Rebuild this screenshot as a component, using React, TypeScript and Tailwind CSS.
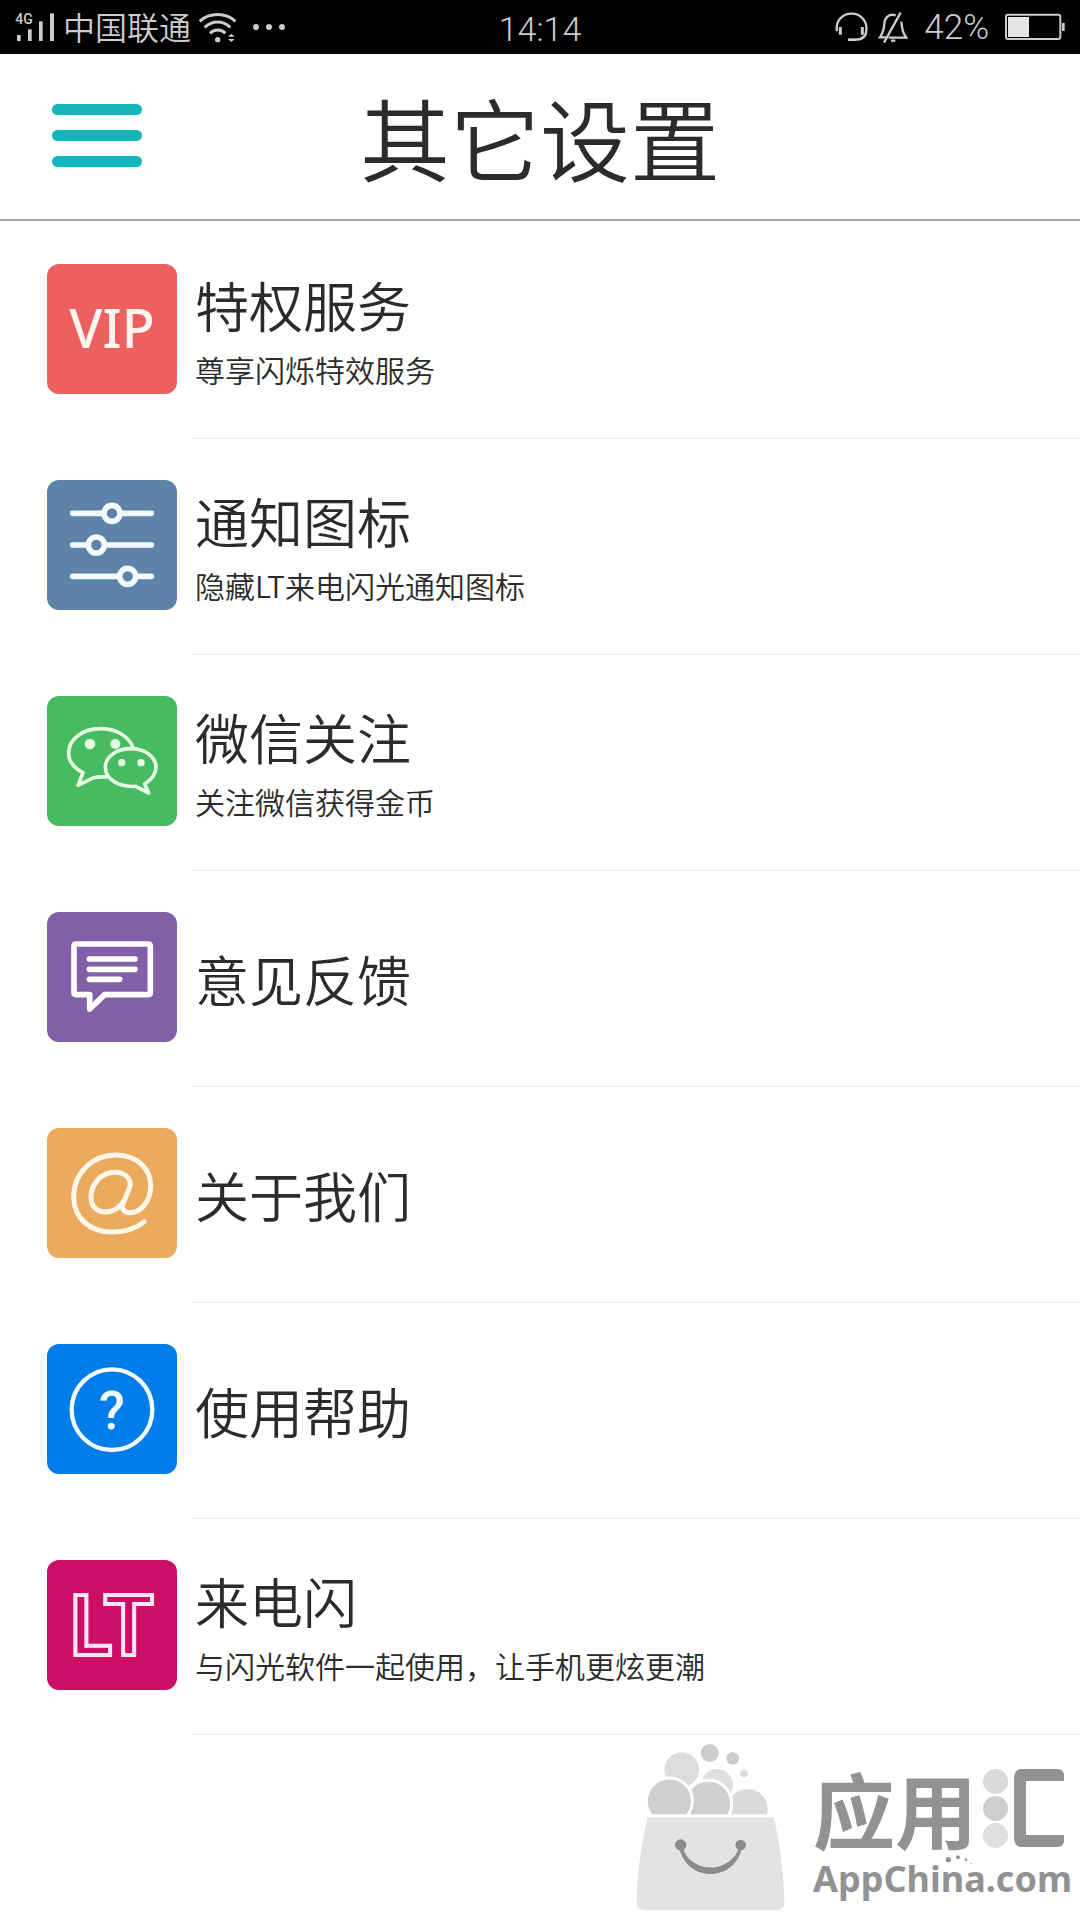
import type { ReactNode } from "react";

interface SettingItem {
  id: string;
  title: string;
  description?: string;
  tile: string;
  icon: ReactNode;
}

const SignalIcon = () => (
  <svg viewBox="45 36 120 90" className="h-[30px] w-10" fill="#cccccc" aria-hidden="true">
    <text x="46" y="72" fontSize="42" fontWeight="500" fontFamily="Roboto, sans-serif">
      4G
    </text>
    <rect x="51" y="105" width="11" height="18" />
    <rect x="84" y="88" width="11" height="35" />
    <rect x="117" y="64" width="11" height="59" />
    <rect x="150" y="40" width="12" height="83" />
  </svg>
);

const WifiIcon = () => (
  <svg viewBox="600 33 114 93" className="h-[31px] w-[38px]" fill="none" stroke="#cccccc" strokeWidth="9" aria-hidden="true">
    <path d="M602 61 C632 34 680 34 709 61" />
    <path d="M617 79 C640 58 672 58 694 79" />
    <path d="M633 97 C646 84 667 84 679 97" />
    <circle cx="656" cy="116" r="8" fill="#cccccc" stroke="none" />
    <path d="M687 107 L697 98 L707 107 Z M687 114 L697 123 L707 114 Z" fill="#cccccc" stroke="none" />
  </svg>
);

const HeadsetIcon = () => (
  <svg viewBox="165 36 99 90" className="h-[30px] w-[33px]" fill="none" stroke="#cccccc" strokeWidth="7" aria-hidden="true">
    <path d="M171 94 C165 62 188 41 215 41 C242 41 262 62 259 92 C258 112 245 119 226 119" />
    <path d="M204 119 H228" strokeWidth="8" />
    <path d="M181 81 V104 M247 81 V104" strokeWidth="9" />
  </svg>
);

const BellOffIcon = () => (
  <svg viewBox="294 33 90 96" className="h-8 w-[30px]" fill="none" stroke="#cccccc" strokeWidth="7" aria-hidden="true">
    <path d="M347 46 C328 40 314 52 313 71 C312 92 308 100 300 112 H318" />
    <path d="M364 65 C366 92 370 99 379 113 H326" />
    <path d="M362 38 L312 128" />
    <path d="M333 122 H346" />
  </svg>
);

const BatteryIcon = () => (
  <svg viewBox="672 39 180 84" className="h-7 w-[60px]" aria-hidden="true">
    <rect x="675" y="44" width="163" height="73" rx="6" fill="none" stroke="#cccccc" strokeWidth="6" />
    <rect x="681" y="51" width="63" height="60" fill="#e6e6e6" />
    <rect x="843" y="69" width="8" height="24" fill="#cccccc" />
  </svg>
);

const tileSvg = "size-full";

const SlidersIcon = () => (
  <svg viewBox="0 0 390 390" className={tileSvg} fill="#5d84a8" stroke="#f2faff" strokeWidth="17" strokeLinecap="round" aria-hidden="true">
    <path d="M77 100 H313 M77 195 H313 M77 289 H313" />
    <circle cx="195" cy="100" r="24" />
    <circle cx="148" cy="195" r="24" />
    <circle cx="242" cy="289" r="24" />
  </svg>
);

const WechatIcon = () => (
  <svg viewBox="0 0 390 390" className={tileSvg} fill="none" stroke="#e6ffe2" strokeWidth="11" strokeLinejoin="round" aria-hidden="true">
    <path d="M258 154 C243 118 205 98 161 98 C106 98 65 130 65 170 C65 195 82 217 108 230 L93 268 L140 245 C155 241 170 243 182 243" />
    <path d="M251 158 C294 158 327 183 327 214 C327 234 315 250 293 264 L305 291 L266 271 C210 275 175 246 175 214 C175 183 208 158 251 158 Z" />
    <g fill="#e6ffe2" stroke="none">
      <circle cx="129" cy="144" r="16" />
      <circle cx="205" cy="144" r="15" />
      <circle cx="224" cy="200" r="11" />
      <circle cx="282" cy="200" r="11" />
    </g>
  </svg>
);

const FeedbackIcon = () => (
  <svg viewBox="0 0 390 390" className={tileSvg} fill="none" stroke="#ffffff" strokeWidth="17" strokeLinecap="round" strokeLinejoin="round" aria-hidden="true">
    <path d="M88 96 H303 Q310 96 310 103 V241 Q310 248 303 248 H173 L128 291 V248 H88 Q81 248 81 241 V103 Q81 96 88 96 Z" />
    <path d="M127 141 H264 M127 172 H264 M127 202 H218" />
  </svg>
);

const AtIcon = () => (
  <svg viewBox="0 0 390 390" className={tileSvg} fill="none" stroke="#fff8e8" strokeWidth="15" strokeLinecap="round" aria-hidden="true">
    <path d="M292 281 C265 304 232 312 195 312 C128 312 80 270 80 206 C80 135 137 81 205 81 C270 81 311 122 311 173 C311 222 280 254 248 254 C230 254 222 242 228 226" />
    <path d="M228 226 L246 184 C258 154 236 133 204 133 C160 133 132 172 132 206 C132 236 150 252 174 252 C200 252 218 240 230 220" />
  </svg>
);

const HelpIcon = () => (
  <svg viewBox="0 0 390 390" className={tileSvg} fill="none" aria-hidden="true">
    <circle cx="195" cy="197" r="121" stroke="#f0fbff" strokeWidth="13" />
    <text x="195" y="254" textAnchor="middle" fontSize="160" fontWeight="500" fontFamily="Roboto, sans-serif" fill="#f0fbff">
      ?
    </text>
  </svg>
);

const LtIcon = () => (
  <svg viewBox="0 0 390 390" className={tileSvg} aria-hidden="true">
    <text
      x="192"
      y="284"
      textAnchor="middle"
      fontSize="246"
      fontWeight="700"
      fontFamily="Lato, sans-serif"
      fill="none"
      stroke="#ffe6f4"
      strokeWidth="12"
    >
      LT
    </text>
  </svg>
);

const items: SettingItem[] = [
  {
    id: "vip",
    title: "特权服务",
    description: "尊享闪烁特效服务",
    tile: "bg-[#ec6060]",
    icon: <span className="pb-1 font-['Noto_Sans'] text-[54px] leading-none font-medium text-[#fff4ee]">VIP</span>,
  },
  { id: "notify", title: "通知图标", description: "隐藏LT来电闪光通知图标", tile: "bg-[#5d84a8]", icon: <SlidersIcon /> },
  { id: "wechat", title: "微信关注", description: "关注微信获得金币", tile: "bg-[#46bb62]", icon: <WechatIcon /> },
  { id: "feedback", title: "意见反馈", tile: "bg-[#8160a8]", icon: <FeedbackIcon /> },
  { id: "about", title: "关于我们", tile: "bg-[#ebaa5e]", icon: <AtIcon /> },
  { id: "help", title: "使用帮助", tile: "bg-[#007de8]", icon: <HelpIcon /> },
  { id: "lt", title: "来电闪", description: "与闪光软件一起使用，让手机更炫更潮", tile: "bg-[#cc0f66]", icon: <LtIcon /> },
];

const StatusBar = () => (
  <div className="grid h-[54px] grid-cols-[1fr_auto_1fr] items-center bg-black px-[15px] text-[#cccccc]">
    <div className="flex items-center gap-2">
      <SignalIcon />
      <span className="pb-0.5 text-[32px] leading-none font-[350]">中国联通</span>
      <WifiIcon />
      <span className="flex gap-[7px] pl-2">
        <i className="size-1.5 rounded-full bg-[#cccccc]" />
        <i className="size-1.5 rounded-full bg-[#cccccc]" />
        <i className="size-1.5 rounded-full bg-[#cccccc]" />
      </span>
    </div>
    <time className="pt-1 font-[Roboto] text-[34px] leading-none font-light">14:14</time>
    <div className="flex items-center justify-end gap-4">
      <div className="flex items-center gap-2.5">
        <HeadsetIcon />
        <BellOffIcon />
      </div>
      <span className="font-[Roboto] text-[35px] leading-none font-light">42%</span>
      <BatteryIcon />
    </div>
  </div>
);

const Header = () => (
  <header className="grid h-[167px] grid-cols-[1fr_auto_1fr] items-center border-b-2 border-[#a3a3a3] px-[52px] pb-0.5">
    <button type="button" aria-label="菜单" className="flex w-[90px] flex-col gap-[15px]">
      <span className="h-[11px] rounded-full bg-[#12b6b8]" />
      <span className="h-[11px] rounded-full bg-[#12b6b8]" />
      <span className="h-[11px] rounded-full bg-[#12b6b8]" />
    </button>
    <h1 className="text-[90px] leading-none font-[350]">其它设置</h1>
  </header>
);

const SettingRow = ({ item }: { item: SettingItem }) => (
  <li>
    <button type="button" className="flex h-[216px] w-full items-stretch gap-[15px] pl-[47px] text-left">
      <span className={`mt-[41px] flex size-[130px] shrink-0 items-center justify-center overflow-hidden rounded-xl ${item.tile}`}>
        {item.icon}
      </span>
      <span className="flex flex-1 flex-col justify-center gap-4 border-b-2 border-[#f2f2f2] pt-0.5 pl-[3px]">
        <span className="text-[54px] leading-[60px] font-[350]">{item.title}</span>
        {item.description && <span className="text-[30px] leading-9 font-[350]">{item.description}</span>}
      </span>
    </button>
  </li>
);

const BagLogo = () => (
  <svg viewBox="50 68 450 504" className="h-[168px] w-[150px] shrink-0" aria-hidden="true">
    <circle cx="190" cy="148" r="52" fill="#dcdcdc" />
    <circle cx="296" cy="194" r="48" fill="#e0e0e0" />
    <circle cx="274" cy="98" r="27" fill="#cccccc" />
    <circle cx="343" cy="114" r="19" fill="#cccccc" />
    <circle cx="377" cy="160" r="11" fill="#dcdcdc" />
    <circle cx="388" cy="266" r="60" fill="#dadada" />
    <circle cx="270" cy="250" r="70" fill="#cfcfcf" stroke="#ffffff" strokeWidth="9" />
    <circle cx="153" cy="242" r="69" fill="#cfcfcf" stroke="#ffffff" strokeWidth="9" />
    <rect x="50" y="282" width="450" height="100" fill="#ffffff" />
    <path d="M88 291 H466 C485 370 495 450 498 545 Q498 570 472 570 H80 Q55 570 55 545 C56 450 70 370 88 291 Z" fill="#e3e3e3" />
    <circle cx="187" cy="374" r="17" fill="#8c8c8c" />
    <circle cx="367" cy="374" r="16" fill="#8c8c8c" />
    <path d="M183 382 C205 487 348 487 371 382 L363 380 C338 462 215 462 193 380 Z" fill="#8c8c8c" />
  </svg>
);

const Footer = () => (
  <footer className="flex justify-end gap-7 pt-2 pr-2 text-[#929292]">
    <BagLogo />
    <div className="flex flex-col gap-2 pt-[22px]">
      <div className="flex items-center gap-1.5">
        <span className="text-[82px] leading-[86px] font-bold">应用</span>
        <span className="flex items-center gap-1.5" role="img" aria-label="汇">
          <span className="flex flex-col gap-0.5">
            <i className="size-[25px] rounded-full bg-[#dadada]" />
            <i className="size-[25px] rounded-full bg-[#cecece]" />
            <i className="size-[25px] rounded-full bg-[#dfdfdf]" />
          </span>
          <i className="h-[78px] w-[50px] rounded-l-lg rounded-r-md border-y-[12px] border-l-[12px] border-[#929292]" />
        </span>
      </div>
      <div className="relative font-['Noto_Sans'] text-[36px] leading-10 font-bold">
        AppChina.com
        <svg viewBox="0 0 90 30" className="absolute -top-1 left-[132px] h-[10px] w-[30px]" fill="#929292" aria-hidden="true">
          <circle cx="10" cy="14" r="8" />
          <circle cx="39" cy="7" r="6" />
          <circle cx="63" cy="14" r="4" />
          <circle cx="79" cy="25" r="2" />
        </svg>
      </div>
    </div>
  </footer>
);

export default function App() {
  return (
    <div className="min-h-screen overflow-x-hidden bg-white font-['Noto_Sans_CJK_SC',sans-serif] text-[#2b2b2b]">
      <StatusBar />
      <Header />
      <main className="pt-0.5">
        <ul>
          {items.map((item) => (
            <SettingRow key={item.id} item={item} />
          ))}
        </ul>
      </main>
      <Footer />
    </div>
  );
}
